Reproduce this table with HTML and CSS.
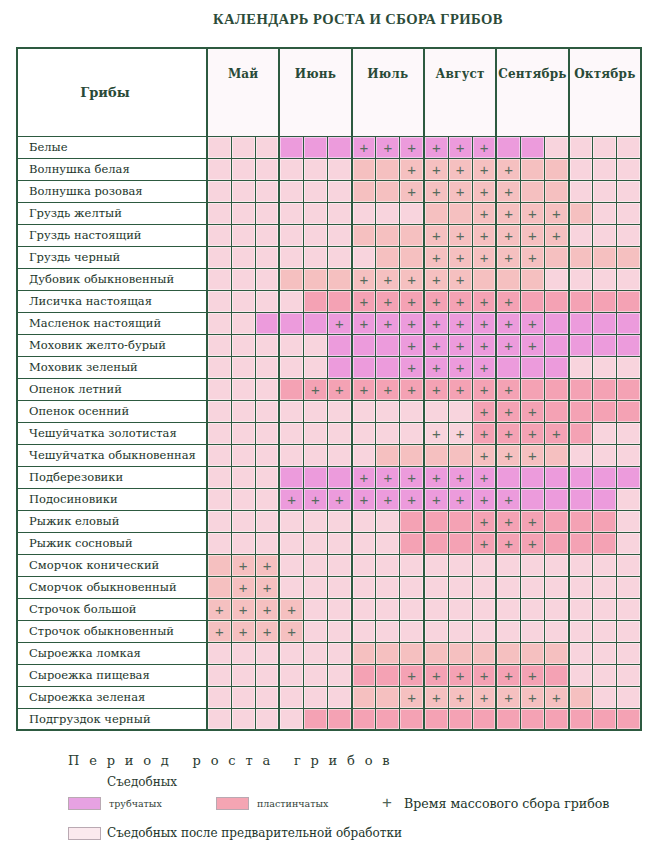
FILE: index.html
```html
<!DOCTYPE html>
<html lang="ru">
<head>
<meta charset="utf-8">
<title>Календарь роста и сбора грибов</title>
<link rel="stylesheet" href="styles.css">
</head>
<body>
<h1 class="title">КАЛЕНДАРЬ РОСТА И СБОРА ГРИБОВ</h1>
<table class="chart">
<colgroup><col class="c-name"><col span="18"></colgroup>
<thead>
<tr><th class="h-name">Грибы</th><th class="h-month" colspan="3">Май</th><th class="h-month" colspan="3">Июнь</th><th class="h-month" colspan="3">Июль</th><th class="h-month" colspan="3">Август</th><th class="h-month" colspan="3">Сентябрь</th><th class="h-month" colspan="3">Октябрь</th></tr>
</thead>
<tbody>
<tr><th>Белые</th><td class=e></td><td class=e></td><td class=e></td><td class=t></td><td class=t></td><td class=t></td><td class=t>+</td><td class=t>+</td><td class=t>+</td><td class=t>+</td><td class=t>+</td><td class=t>+</td><td class=t></td><td class=t></td><td class=e></td><td class=e></td><td class=e></td><td class=e></td></tr>
<tr><th>Волнушка белая</th><td class=e></td><td class=e></td><td class=e></td><td class=e></td><td class=e></td><td class=e></td><td class=p></td><td class=p></td><td class=p>+</td><td class=p>+</td><td class=p>+</td><td class=p>+</td><td class=p>+</td><td class=p></td><td class=p></td><td class=e></td><td class=e></td><td class=e></td></tr>
<tr><th>Волнушка розовая</th><td class=e></td><td class=e></td><td class=e></td><td class=e></td><td class=e></td><td class=e></td><td class=p></td><td class=p></td><td class=p>+</td><td class=p>+</td><td class=p>+</td><td class=p>+</td><td class=p>+</td><td class=p></td><td class=p></td><td class=e></td><td class=e></td><td class=e></td></tr>
<tr><th>Груздь желтый</th><td class=e></td><td class=e></td><td class=e></td><td class=e></td><td class=e></td><td class=e></td><td class=e></td><td class=e></td><td class=e></td><td class=p></td><td class=p></td><td class=p>+</td><td class=p>+</td><td class=p>+</td><td class=p>+</td><td class=p></td><td class=e></td><td class=e></td></tr>
<tr><th>Груздь настоящий</th><td class=e></td><td class=e></td><td class=e></td><td class=e></td><td class=e></td><td class=e></td><td class=p></td><td class=p></td><td class=p></td><td class=p>+</td><td class=p>+</td><td class=p>+</td><td class=p>+</td><td class=p>+</td><td class=p>+</td><td class=e></td><td class=e></td><td class=e></td></tr>
<tr><th>Груздь черный</th><td class=e></td><td class=e></td><td class=e></td><td class=e></td><td class=e></td><td class=e></td><td class=e></td><td class=p></td><td class=p></td><td class=p>+</td><td class=p>+</td><td class=p>+</td><td class=p>+</td><td class=p>+</td><td class=p></td><td class=p></td><td class=p></td><td class=p></td></tr>
<tr><th>Дубовик обыкновенный</th><td class=e></td><td class=e></td><td class=e></td><td class=p></td><td class=p></td><td class=p></td><td class=p>+</td><td class=p>+</td><td class=p>+</td><td class=p>+</td><td class=p>+</td><td class=p></td><td class=p></td><td class=p></td><td class=e></td><td class=e></td><td class=e></td><td class=e></td></tr>
<tr><th>Лисичка настоящая</th><td class=e></td><td class=e></td><td class=e></td><td class=e></td><td class=l></td><td class=l></td><td class=l>+</td><td class=l>+</td><td class=l>+</td><td class=l>+</td><td class=l>+</td><td class=l>+</td><td class=l>+</td><td class=l></td><td class=l></td><td class=l></td><td class=l></td><td class=l></td></tr>
<tr><th>Масленок настоящий</th><td class=e></td><td class=e></td><td class=t></td><td class=t></td><td class=t></td><td class=t>+</td><td class=t>+</td><td class=t>+</td><td class=t>+</td><td class=t>+</td><td class=t>+</td><td class=t>+</td><td class=t>+</td><td class=t>+</td><td class=t></td><td class=t></td><td class=t></td><td class=t></td></tr>
<tr><th>Моховик желто-бурый</th><td class=e></td><td class=e></td><td class=e></td><td class=e></td><td class=e></td><td class=t></td><td class=t></td><td class=t></td><td class=t>+</td><td class=t>+</td><td class=t>+</td><td class=t>+</td><td class=t>+</td><td class=t>+</td><td class=t></td><td class=t></td><td class=t></td><td class=t></td></tr>
<tr><th>Моховик зеленый</th><td class=e></td><td class=e></td><td class=e></td><td class=e></td><td class=e></td><td class=t></td><td class=t></td><td class=t></td><td class=t>+</td><td class=t>+</td><td class=t>+</td><td class=t>+</td><td class=t></td><td class=t></td><td class=t></td><td class=e></td><td class=e></td><td class=e></td></tr>
<tr><th>Опенок летний</th><td class=e></td><td class=e></td><td class=e></td><td class=l></td><td class=l>+</td><td class=l>+</td><td class=l>+</td><td class=l>+</td><td class=l>+</td><td class=l>+</td><td class=l>+</td><td class=l>+</td><td class=l>+</td><td class=l></td><td class=l></td><td class=l></td><td class=l></td><td class=l></td></tr>
<tr><th>Опенок осенний</th><td class=e></td><td class=e></td><td class=e></td><td class=e></td><td class=e></td><td class=e></td><td class=e></td><td class=e></td><td class=e></td><td class=e></td><td class=e></td><td class=l>+</td><td class=l>+</td><td class=l>+</td><td class=l></td><td class=l></td><td class=l></td><td class=l></td></tr>
<tr><th>Чешуйчатка золотистая</th><td class=e></td><td class=e></td><td class=e></td><td class=e></td><td class=e></td><td class=e></td><td class=e></td><td class=e></td><td class=e></td><td class=e>+</td><td class=e>+</td><td class=l>+</td><td class=l>+</td><td class=l>+</td><td class=l>+</td><td class=l></td><td class=e></td><td class=e></td></tr>
<tr><th>Чешуйчатка обыкновенная</th><td class=e></td><td class=e></td><td class=e></td><td class=e></td><td class=e></td><td class=e></td><td class=e></td><td class=p></td><td class=p></td><td class=p></td><td class=p></td><td class=p>+</td><td class=p>+</td><td class=p>+</td><td class=p></td><td class=e></td><td class=e></td><td class=e></td></tr>
<tr><th>Подберезовики</th><td class=e></td><td class=e></td><td class=e></td><td class=t></td><td class=t></td><td class=t></td><td class=t>+</td><td class=t>+</td><td class=t>+</td><td class=t>+</td><td class=t>+</td><td class=t>+</td><td class=t></td><td class=t></td><td class=t></td><td class=t></td><td class=t></td><td class=t></td></tr>
<tr><th>Подосиновики</th><td class=e></td><td class=e></td><td class=e></td><td class=t>+</td><td class=t>+</td><td class=t>+</td><td class=t>+</td><td class=t>+</td><td class=t>+</td><td class=t>+</td><td class=t>+</td><td class=t>+</td><td class=t>+</td><td class=t></td><td class=t></td><td class=t></td><td class=t></td><td class=e></td></tr>
<tr><th>Рыжик еловый</th><td class=e></td><td class=e></td><td class=e></td><td class=e></td><td class=e></td><td class=e></td><td class=e></td><td class=e></td><td class=l></td><td class=l></td><td class=l></td><td class=l>+</td><td class=l>+</td><td class=l>+</td><td class=l></td><td class=l></td><td class=l></td><td class=e></td></tr>
<tr><th>Рыжик сосновый</th><td class=e></td><td class=e></td><td class=e></td><td class=e></td><td class=e></td><td class=e></td><td class=e></td><td class=e></td><td class=l></td><td class=l></td><td class=l></td><td class=l>+</td><td class=l>+</td><td class=l>+</td><td class=l></td><td class=l></td><td class=l></td><td class=e></td></tr>
<tr><th>Сморчок конический</th><td class=p></td><td class=p>+</td><td class=p>+</td><td class=e></td><td class=e></td><td class=e></td><td class=e></td><td class=e></td><td class=e></td><td class=e></td><td class=e></td><td class=e></td><td class=e></td><td class=e></td><td class=e></td><td class=e></td><td class=e></td><td class=e></td></tr>
<tr><th>Сморчок обыкновенный</th><td class=p></td><td class=p>+</td><td class=p>+</td><td class=e></td><td class=e></td><td class=e></td><td class=e></td><td class=e></td><td class=e></td><td class=e></td><td class=e></td><td class=e></td><td class=e></td><td class=e></td><td class=e></td><td class=e></td><td class=e></td><td class=e></td></tr>
<tr><th>Строчок большой</th><td class=p>+</td><td class=p>+</td><td class=p>+</td><td class=p>+</td><td class=e></td><td class=e></td><td class=e></td><td class=e></td><td class=e></td><td class=e></td><td class=e></td><td class=e></td><td class=e></td><td class=e></td><td class=e></td><td class=e></td><td class=e></td><td class=e></td></tr>
<tr><th>Строчок обыкновенный</th><td class=p>+</td><td class=p>+</td><td class=p>+</td><td class=p>+</td><td class=e></td><td class=e></td><td class=e></td><td class=e></td><td class=e></td><td class=e></td><td class=e></td><td class=e></td><td class=e></td><td class=e></td><td class=e></td><td class=e></td><td class=e></td><td class=e></td></tr>
<tr><th>Сыроежка ломкая</th><td class=e></td><td class=e></td><td class=e></td><td class=e></td><td class=e></td><td class=e></td><td class=p></td><td class=p></td><td class=p></td><td class=p></td><td class=p></td><td class=p></td><td class=p></td><td class=p></td><td class=p></td><td class=e></td><td class=e></td><td class=e></td></tr>
<tr><th>Сыроежка пищевая</th><td class=e></td><td class=e></td><td class=e></td><td class=e></td><td class=e></td><td class=e></td><td class=l></td><td class=l></td><td class=l>+</td><td class=l>+</td><td class=l>+</td><td class=l>+</td><td class=l>+</td><td class=l>+</td><td class=l></td><td class=e></td><td class=e></td><td class=e></td></tr>
<tr><th>Сыроежка зеленая</th><td class=e></td><td class=e></td><td class=e></td><td class=e></td><td class=e></td><td class=e></td><td class=p></td><td class=p></td><td class=p>+</td><td class=p>+</td><td class=p>+</td><td class=p>+</td><td class=p>+</td><td class=p>+</td><td class=p>+</td><td class=p></td><td class=e></td><td class=e></td></tr>
<tr><th>Подгруздок черный</th><td class=e></td><td class=e></td><td class=e></td><td class=e></td><td class=l></td><td class=l></td><td class=l></td><td class=l></td><td class=l></td><td class=l></td><td class=l></td><td class=l></td><td class=l></td><td class=l></td><td class=l></td><td class=l></td><td class=l></td><td class=l></td></tr>
</tbody>
</table>
<div class="legend">
  <p class="lg-title">Период роста грибов</p>
  <p class="lg-sub">Съедобных</p>
  <div class="lg-row">
    <span class="lg-item lg-w1"><span class="sw sw-t"></span><span class="sm">трубчатых</span></span>
    <span class="lg-item lg-w2"><span class="sw sw-l"></span><span class="sm">пластинчатых</span></span>
    <span class="lg-item"><span class="lg-plus">+</span><span class="big">Время массового сбора грибов</span></span>
  </div>
  <div class="lg-row lg-row2">
    <span class="lg-item"><span class="sw sw-p"></span><span class="md">Съедобных после предварительной обработки</span></span>
  </div>
</div>
</body>
</html>
```
FILE: styles.css
```css
* { box-sizing: border-box; }
body {
  margin: 0;
  width: 650px;
  background: #ffffff;
  font-family: "DejaVu Serif", "Liberation Serif", serif;
  color: #24382c;
}
.title {
  margin: 0;
  height: 47px;
  padding: 11px 0 0 66px;
  text-align: center;
  font: bold 14.6px/16px "Liberation Serif", serif;
  color: #2c4b39;
  letter-spacing: 0.4px;
}
.chart {
  margin-left: 16px;
  width: 626px;
  table-layout: fixed;
  border-collapse: collapse;
  border: 2px solid #2d5a40;
}
.c-name { width: 190px; }
.chart th, .chart td {
  border: 1px solid #2d5a40;
  padding: 0;
}
.chart .h-name {
  height: 88px;
  padding-right: 14px;
  background: #fff;
  font: bold 13px "DejaVu Serif", serif;
  color: #294a37;
  text-align: center;
  border-right-width: 2px;
}
.chart .h-month {
  vertical-align: top;
  padding-top: 17px;
  background: #fdf8fa;
  font: bold 12px/16px "DejaVu Serif", serif;
  color: #294a37;
  border-left-width: 2px;
  border-right-width: 2px;
  white-space: nowrap;
  letter-spacing: 0.2px;
}
.chart tbody th {
  height: 22px;
  padding-left: 11px;
  text-align: left;
  font: normal 11.5px "DejaVu Serif", serif;
  color: #22352a;
  background: #fff;
  white-space: nowrap;
  border-right-width: 2px;
}
.chart tbody td {
  height: 22px;
  text-align: center;
  font: 15px/1 "Liberation Sans", sans-serif;
  color: #556b5c;
  box-shadow: inset 0 0 0 1px rgba(255,255,255,0.45);
}
.chart tbody td:nth-child(3n+2) { border-left-width: 2px; }
.e { background: #f8d4dd; }
.t { background: #ec9bdc; }
.l { background: #f4a2b4; }
.p { background: #f5c0c0; }

.legend {
  padding: 21px 0 0 68px;
}
.legend p { margin: 0; }
.lg-title {
  font: 13px/18px "DejaVu Serif", serif;
  letter-spacing: 9.8px;
  color: #2b3b31;
}
.lg-sub {
  padding-left: 39px;
  margin-top: 3px !important;
  font: 12px/18px "DejaVu Serif", serif;
  color: #2b3b31;
}
.lg-row {
  display: flex;
  align-items: center;
  height: 24px;
  margin-top: 0;
}
.lg-row2 { margin-top: 6px; }
.lg-item { display: flex; align-items: center; gap: 6px; }
.lg-w1 { width: 148px; }
.lg-w2 { width: 166px; }
.sw {
  width: 33px;
  height: 13px;
  border: 1px solid #b9a9b2;
}
.sw-t { background: #e7a2e2; }
.sw-l { background: #f5a5b3; }
.sw-p { background: #fbe9ee; }
.sm { font: 9.5px "DejaVu Serif", serif; color: #33433a; padding-left: 2px; }
.lg-plus { font: 17px "Liberation Sans", sans-serif; color: #4f6657; width: 16px; }
.big { font: 12.6px "DejaVu Serif", serif; color: #22352a; }
.md { font: 12px "DejaVu Serif", serif; color: #22352a; }
```
